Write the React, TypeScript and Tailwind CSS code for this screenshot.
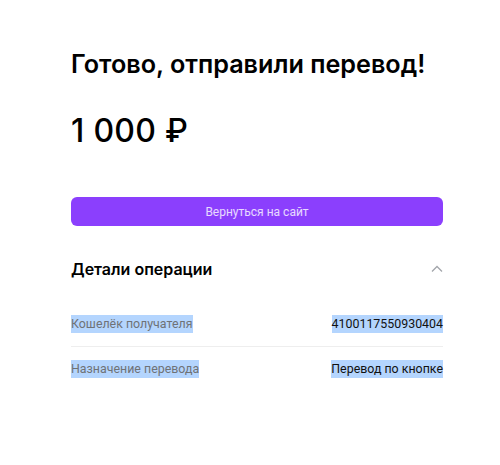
import React from "react";

export default function App() {
  return (
    <div className="min-h-screen bg-white text-black font-['Inter','Noto_Sans',sans-serif]">
      <main className="pl-[71px] pr-[57px] pt-[49px]">
        <h1 className="text-[25.2px] leading-[30px] font-semibold">
          Готово, отправили перевод!
        </h1>
        <div className="mt-[34px] text-[32px] leading-[36px] font-medium tracking-[0.3px]">1 000 ₽</div>

        <button className="mt-[48px] w-full h-[29px] rounded-[6px] bg-[#8b3ffd] font-['Roboto',sans-serif] text-[12px] text-white/80 cursor-pointer">
          Вернуться на сайт
        </button>

        <section className="mt-[30px]">
          <div className="flex items-center justify-between h-[26px]">
            <h2 className="text-[16px] font-semibold">Детали операции</h2>
            <svg width="12" height="8" viewBox="0 0 12 8">
              <path d="M1 6.5L6 1.5L11 6.5" fill="none" stroke="#a3a6ab" strokeWidth="1.3" />
            </svg>
          </div>

          <div className="mt-[31px] font-['Roboto',sans-serif] text-[12.4px]">
            <div className="flex items-center justify-between h-[22px]">
              <span className="bg-[#b4d5fe] text-[#6f7276]">Кошелёк получателя</span>
              <span className="bg-[#b4d5fe] text-[#111]">4100117550930404</span>
            </div>
            <div className="h-px bg-[#eeeeee] mt-[11px]" />
            <div className="flex items-center justify-between h-[22px] mt-[11px]">
              <span className="bg-[#b4d5fe] text-[#6f7276]">Назначение перевода</span>
              <span className="bg-[#b4d5fe] text-[#111]">Перевод по кнопке</span>
            </div>
          </div>
        </section>
      </main>
    </div>
  );
}
